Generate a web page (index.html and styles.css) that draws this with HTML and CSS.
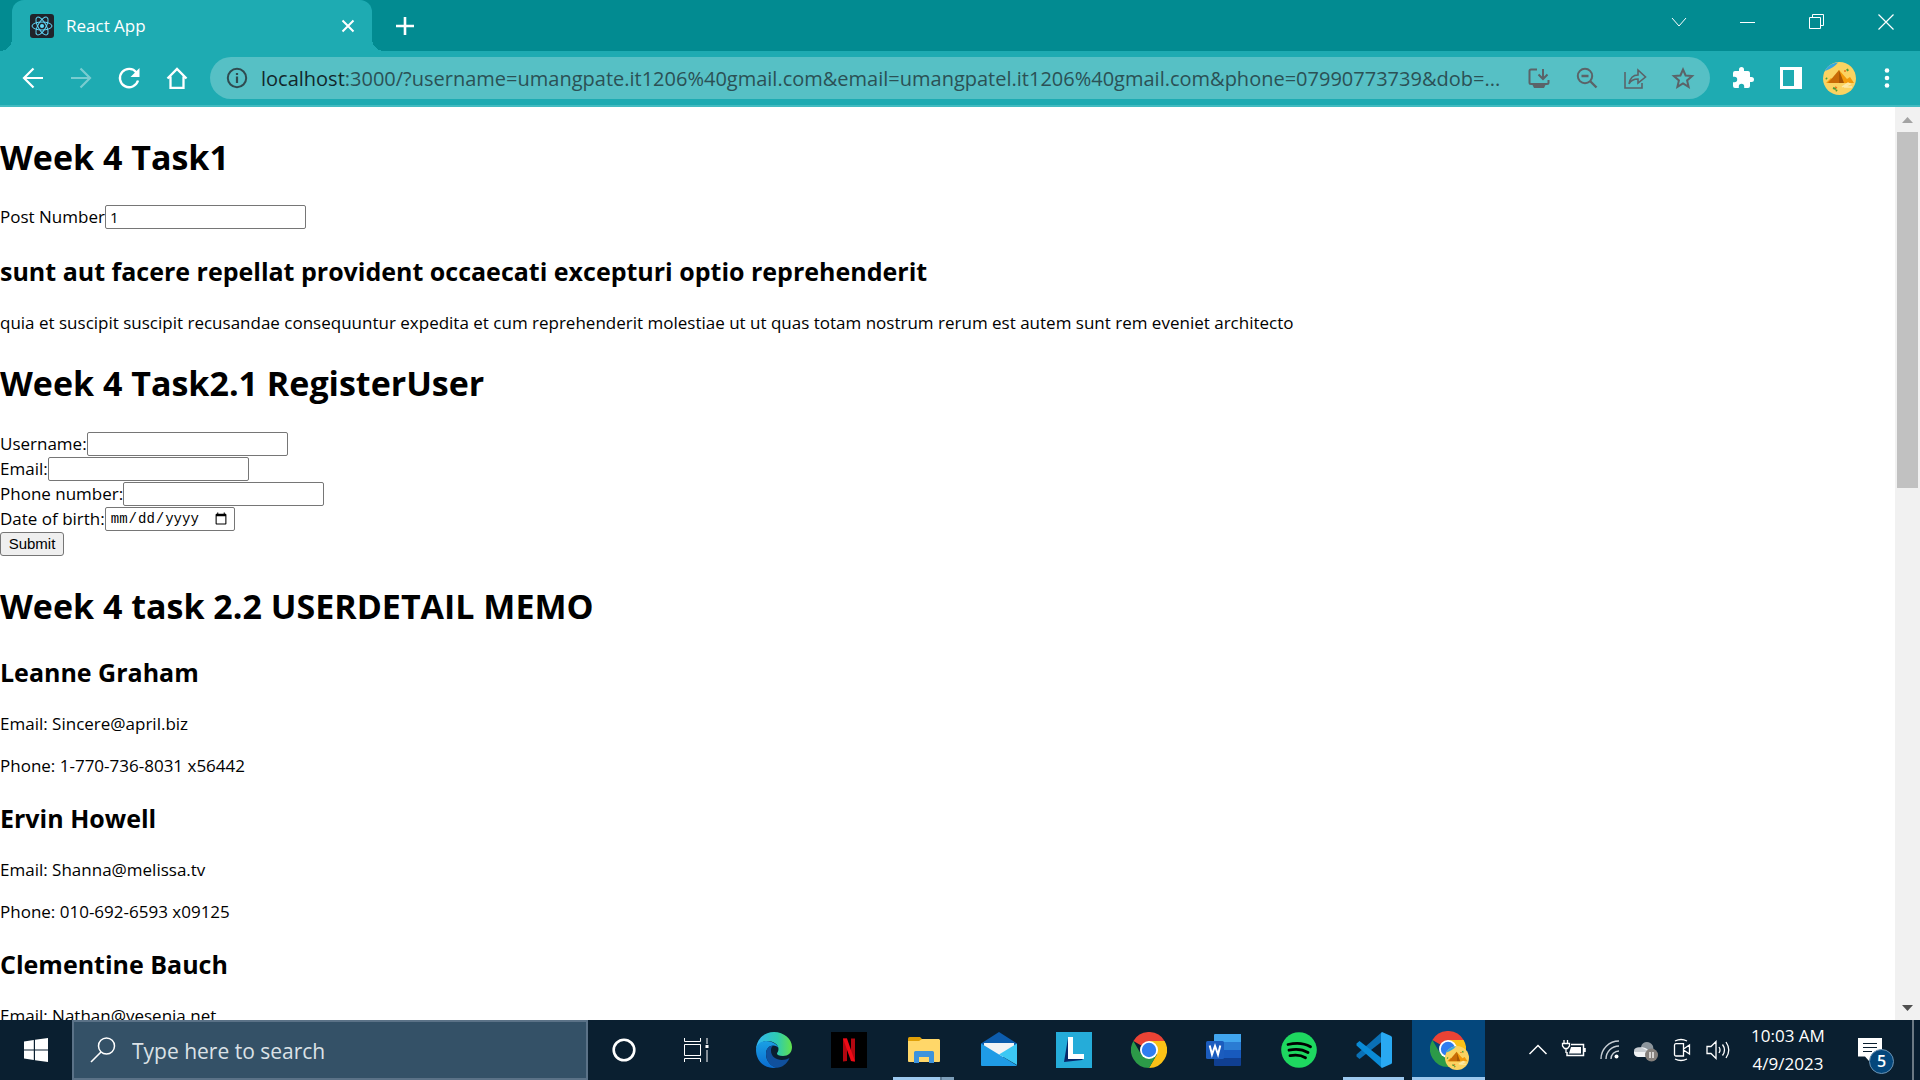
FILE: index.html
```html
<!DOCTYPE html>
<html lang="en">
<head>
<meta charset="utf-8">
<title>React App</title>
<link rel="stylesheet" href="styles.css">
</head>
<body>
<svg class="defs" width="0" height="0" aria-hidden="true">
  <defs>
    <symbol id="chrome" viewBox="0 0 36 36">
      <path d="M18 18 2.4 9A18 18 0 0 1 33.6 9z" fill="#ea4335"/>
      <path d="M18 9h15.6A18 18 0 0 1 18 36l7.8-13.500z" fill="#fbc116"/>
      <path d="M2.400 9A18 18 0 0 0 18 36l7.800-13.500L18 18 10.200 22.500z" fill="#2c9a48"/>
      <circle cx="18" cy="18" r="9" fill="#fff"/>
      <circle cx="18" cy="18" r="7.200" fill="#2f7df0"/>
    </symbol>
    <symbol id="pyramid" viewBox="0 0 33 33">
      <circle cx="16.500" cy="16.500" r="16.500" fill="#fbd361"/>
      <path d="M2 9Q4 3 12 1L15 0.500Q11 6 2 9z" fill="#36a8e0"/>
      <path d="M3 21l5-5 4 4 4-12 8 9 3-2 4 6z" fill="#f39a0a"/>
      <path d="M16 8v13H5z" fill="#c96b06"/>
      <path d="M16 8v13l5 0z" fill="#a85805"/>
      <path d="M19 25l6-4 2 1-6 3h8" fill="none" stroke="#fde9a5" stroke-width="1.500"/>
      <path d="M3 16l1 1M24 7l1 2M10 26l3 1M13 28l1 1" stroke="#4d9a35" stroke-width="2"/>
      <path d="M12 25l2 1M21 9h2" stroke="#ea7a20" stroke-width="1.500"/>
    </symbol>
  </defs>
</svg>

<header class="browser">
  <div class="tabstrip">
    <div class="tab">
      <svg class="favicon" viewBox="0 0 24 24"><rect width="24" height="24" rx="3" fill="#20232a"/><g fill="none" stroke="#61dafb" stroke-width="1"><ellipse cx="12" cy="12" rx="10" ry="4"/><ellipse cx="12" cy="12" rx="10" ry="4" transform="rotate(60 12 12)"/><ellipse cx="12" cy="12" rx="10" ry="4" transform="rotate(120 12 12)"/></g><circle cx="12" cy="12" r="2" fill="#61dafb"/></svg>
      <span class="tab-title">React App</span>
      <button class="plain tab-close" aria-label="Close tab"><svg width="24" height="24" viewBox="0 0 24 24"><path d="M6.500 6.500l11 11M17.500 6.500l-11 11" stroke="#fff" stroke-width="2"/></svg></button>
    </div>
    <button class="plain new-tab" aria-label="New tab"><svg width="24" height="24" viewBox="0 0 24 24"><path d="M12 3v18M3 12h18" stroke="#fff" stroke-width="2.600"/></svg></button>
    <div class="window-controls">
      <button class="plain" aria-label="Search tabs"><svg width="18" height="18" viewBox="0 0 18 18"><path d="M2 5l7 8 7-8" fill="none" stroke="#fff"/></svg></button>
      <button class="plain" aria-label="Minimize"><svg width="16" height="18" viewBox="0 0 16 18"><path d="M0 9.500h15" stroke="#fff"/></svg></button>
      <button class="plain" aria-label="Restore"><svg width="16" height="16" viewBox="0 0 16 16"><path d="M.500 3.500h11v11H.500zM3.500 3.500v-3h11v11h-3" fill="none" stroke="#fff"/></svg></button>
      <button class="plain" aria-label="Close"><svg width="16" height="16" viewBox="0 0 16 16"><path d="M.500.500l15 15M15.500.500l-15 15" stroke="#fff" stroke-width="1.200"/></svg></button>
    </div>
  </div>
  <div class="toolbar">
    <div class="icons">
      <button class="plain" aria-label="Back"><svg width="24" height="24" viewBox="0 0 24 24"><path d="M22 12H4M12.500 2.500L3 12l9.500 9.500" fill="none" stroke="#fff" stroke-width="2.200"/></svg></button>
      <button class="plain dim" aria-label="Forward"><svg width="24" height="24" viewBox="0 0 24 24"><path d="M2 12h18M11.500 2.500L21 12l-9.500 9.500" fill="none" stroke="#fff" stroke-width="2.200"/></svg></button>
      <button class="plain" aria-label="Reload"><svg width="24" height="24" viewBox="0 0 24 24"><path d="M19.500 6.500A9.200 9.200 0 1 0 21 14.500" fill="none" stroke="#fff" stroke-width="2.300"/><path d="M22.500 2v9h-9z" fill="#fff"/></svg></button>
      <button class="plain" aria-label="Home"><svg width="24" height="24" viewBox="0 0 24 24"><path d="M2.500 12.500L12 3l9.500 9.500M5.500 10.500v11.300h13V10.500" fill="none" stroke="#fff" stroke-width="2.300"/></svg></button>
    </div>
    <div class="omnibox">
      <svg class="info" width="24" height="24" viewBox="0 0 24 24"><circle cx="12" cy="12" r="9.200" fill="none" stroke="#2f4b50" stroke-width="2"/><path d="M12 10.500v6.500M12 7v2" stroke="#2f4b50" stroke-width="2.200"/></svg>
      <label for="url">localhost</label><input id="url" class="url" type="text" value=":3000/?username=umangpate.it1206%40gmail.com&amp;email=umangpatel.it1206%40gmail.com&amp;phone=07990773739&amp;dob=...">
      <div class="icons">
        <button class="plain" aria-label="Install"><svg width="24" height="24" viewBox="0 0 24 24"><path d="M10 3.500H4A1.500 1.500 0 0 0 2.500 5v11.500A1.500 1.500 0 0 0 4 18h16a1.500 1.500 0 0 0 1.500-1.500V14M16 3v9M11.500 8.500L16 13l4.500-4.500" fill="none" stroke="#5b6368" stroke-width="2"/><path d="M5 18h14l-2 4H7z" fill="#5b6368"/></svg></button>
        <button class="plain" aria-label="Zoom out"><svg width="24" height="24" viewBox="0 0 24 24"><circle cx="10" cy="10" r="7.200" fill="none" stroke="#5b6368" stroke-width="2"/><path d="M6.500 10h7M15 15l6.500 6.500" stroke="#5b6368" stroke-width="2.400"/></svg></button>
        <button class="plain" aria-label="Share"><svg width="24" height="24" viewBox="0 0 24 24"><path d="M2 6v16h17v-5M6 18c1-6 4-9 9-9V4l7.500 7L15 17v-4c-4 0-7 1-9 5z" fill="none" stroke="#5b6368" stroke-width="1.600"/></svg></button>
        <button class="plain" aria-label="Bookmark"><svg width="24" height="24" viewBox="0 0 24 24"><path d="M12 3.500l2.600 6 6.500.600-5 4.300 1.500 6.400L12 17.400l-5.600 3.400 1.500-6.400-5-4.300 6.500-.600z" fill="none" stroke="#5b6368" stroke-width="2"/></svg></button>
      </div>
    </div>
    <div class="icons">
      <button class="plain" aria-label="Extensions"><svg width="24" height="24" viewBox="0 0 24 24"><path d="M20.500 11H19V7a2 2 0 0 0-2-2h-4V3.500a2.500 2.500 0 0 0-5 0V5H4a2 2 0 0 0-2 2v3.800h1.500a2.700 2.700 0 0 1 0 5.400H2V20a2 2 0 0 0 2 2h3.800v-1.500a2.700 2.700 0 0 1 5.400 0V22H17a2 2 0 0 0 2-2v-4h1.500a2.500 2.500 0 0 0 0-5z" fill="#fff"/></svg></button>
      <button class="plain" aria-label="Side panel"><svg width="22" height="22" viewBox="0 0 22 22"><path d="M0 0h22v22H0zM3 3v16h11V3z" fill="#fff" fill-rule="evenodd"/></svg></button>
      <button class="plain" aria-label="Profile"><svg width="33" height="33"><use href="#pyramid"/></svg></button>
      <button class="plain" aria-label="Menu"><svg width="24" height="24" viewBox="0 0 24 24" fill="#fff"><circle cx="12" cy="4.500" r="2.300"/><circle cx="12" cy="12" r="2.300"/><circle cx="12" cy="19.500" r="2.300"/></svg></button>
    </div>
  </div>
</header>

<div class="viewport">
  <main class="page">
    <h1>Week 4 Task1</h1>
    <div class="field post"><label for="post">Post Number</label><input id="post" type="number" value="1"></div>
    <h2>sunt aut facere repellat provident occaecati excepturi optio reprehenderit</h2>
    <p>quia et suscipit suscipit recusandae consequuntur expedita et cum reprehenderit molestiae ut ut quas totam nostrum rerum est autem sunt rem eveniet architecto</p>
    <h1>Week 4 Task2.1 RegisterUser</h1>
    <form class="register">
      <div class="field"><label for="user">Username:</label><input id="user" type="text"></div>
      <div class="field"><label for="email">Email:</label><input id="email" type="email"></div>
      <div class="field"><label for="phone">Phone number:</label><input id="phone" type="tel"></div>
      <div class="field"><label for="dob">Date of birth:</label><input id="dob" type="date"></div>
      <div class="field"><button class="submit" type="submit">Submit</button></div>
    </form>
    <h1>Week 4 task 2.2 USERDETAIL MEMO</h1>
    <h2>Leanne Graham</h2>
    <p>Email: Sincere@april.biz</p>
    <p>Phone: 1-770-736-8031 x56442</p>
    <h2>Ervin Howell</h2>
    <p>Email: Shanna@melissa.tv</p>
    <p>Phone: 010-692-6593 x09125</p>
    <h2>Clementine Bauch</h2>
    <p>Email: Nathan@yesenia.net</p>
  </main>
  <div class="scrollbar" aria-hidden="true">
    <svg width="25" height="25" viewBox="0 0 25 25"><path d="M7 16h11l-5.500-6z" fill="#a3a3a3"/></svg>
    <div class="thumb"></div>
    <svg class="down" width="25" height="25" viewBox="0 0 25 25"><path d="M7 10h11l-5.500 6z" fill="#505050"/></svg>
  </div>
</div>

<footer class="taskbar">
  <button class="plain start" aria-label="Start"><svg width="24" height="24" viewBox="0 0 24 24" fill="#fff"><path d="M0 3.400L9.800 2v9.500H0zM11 1.800L24 0v11.500H11zM0 12.500h9.800V22L0 20.600zM11 12.500h13V24l-13-1.800z"/></svg></button>
  <div class="search">
    <svg width="26" height="26" viewBox="0 0 26 26"><circle cx="16.500" cy="9" r="8" fill="none" stroke="#fff" stroke-width="1.500"/><path d="M11 15L1 25" stroke="#fff" stroke-width="1.600"/></svg>
    <input type="text" aria-label="Search" placeholder="Type here to search">
  </div>
  <button class="plain sys" aria-label="Cortana"><svg width="24" height="24" viewBox="0 0 24 24"><circle cx="12" cy="12" r="10.300" fill="none" stroke="#fff" stroke-width="2.600"/></svg></button>
  <button class="plain sys" aria-label="Task view"><svg width="25" height="24" viewBox="0 0 25 24"><path d="M.500 0v3.500h16V0M.500 6.500h16v11H.500zM.500 24v-3.500h16V24M23 0v6M23 12v12" fill="none" stroke="#fff"/><path d="M21.500 7h3v3h-3z" fill="#fff"/></svg></button>

  <button class="plain app" aria-label="Microsoft Edge"><svg width="36" height="36" viewBox="0 0 36 36">
    <defs><linearGradient id="eg1"><stop offset="0" stop-color="#32b5f2"/><stop offset=".600" stop-color="#2fcbb0"/><stop offset="1" stop-color="#62e24c"/></linearGradient><linearGradient id="eg2" x1="0" y1="0" x2="0" y2="1"><stop offset="0" stop-color="#1aa0e4"/><stop offset="1" stop-color="#0a6cd0"/></linearGradient></defs>
    <path d="M0 17C1 7 8 0 18 0c10 0 18 7 18 15 0 6-4 9-9 9-4 0-6-1-6-2.500 0-1 1.500-1.500 1.500-4.500C22.500 12 17 9 11 9 6 9 2 12 0 17z" fill="url(#eg1)"/>
    <path d="M0 18c0-5 4-9 10-9 7 0 12 4 12.500 7-1-1.500-3-2.500-5-2.500C13 13.500 10 17 10 22c0 7 5 12.500 11 13.500C9 38 0 29 0 18z" fill="url(#eg2)"/>
    <path d="M10 22c0-5 3-8.500 7-8.500-1.500 1.500-2 3-2 5 0 6 5 9.500 11 9.500 3 0 5-.700 7.500-2C31 32 26 35.500 21 35.800 15 35 10 29 10 22z" fill="#10509c"/>
  </svg></button>
  <button class="plain app" aria-label="Netflix"><svg width="36" height="36" viewBox="0 0 36 36"><path d="M0 0h36v36H0z"/><path d="M12 6.500h4V29l-4 .500zM20 6.500h4v23l-4-.500z" fill="#b20710"/><path d="M12 6.500h4l8 23-4-.500z" fill="#ee0a16"/></svg></button>
  <button class="plain app open grouped" aria-label="File Explorer"><svg width="36" height="36" viewBox="0 0 36 36"><path d="M2 6.500a1.500 1.500 0 0 1 1.500-1.500H14l3 3v4H2z" fill="#e0a008"/><path d="M2 9h11l3-2h17l1 1v21a1 1 0 0 1-1 1H3a1 1 0 0 1-1-1z" fill="#ffd769"/><path d="M8 31V20.500a1.500 1.500 0 0 1 1.500-1.500h17a1.500 1.500 0 0 1 1.500 1.500V31h-5v-6H13v6z" fill="#3d93dc"/></svg></button>
  <button class="plain app" aria-label="Mail"><svg width="36" height="36" viewBox="0 0 36 36"><path d="M0 11.500L18 0l18 11.500V16H0z" fill="#0c5cad"/><path d="M3 11h30v9L18 27 3 20z" fill="#f2f3f5"/><path d="M0 11.500l18 11 18 11V33a1 1 0 0 1-1 1H1a1 1 0 0 1-1-1z" fill="#1f9be6"/><path d="M36 11.500L18 22.500 36 33z" fill="#3cc8f4"/></svg></button>
  <button class="plain app" aria-label="LearnIt"><svg width="36" height="36" viewBox="0 0 36 36"><path d="M0 0h36v36H0z" fill="#25acd9"/><path d="M12 6L8 30l4-3zM8 30l18-2 2-2H12z" fill="#06286b"/><path d="M12 5h5v17h11v5H12z" fill="#fff"/></svg></button>
  <button class="plain app" aria-label="Google Chrome"><svg width="36" height="36"><use href="#chrome"/></svg></button>
  <button class="plain app" aria-label="Word"><svg width="36" height="36" viewBox="0 0 36 36"><path d="M9 2h26v8H8V3a1 1 0 0 1 1-1z" fill="#41a5ee"/><path d="M8 10h27v8H8z" fill="#2b7cd3"/><path d="M8 18h27v8H8z" fill="#185abd"/><path d="M8 26h27v7a1 1 0 0 1-1 1H9a1 1 0 0 1-1-1z" fill="#103f91"/><rect y="9" width="18" height="18" rx="1.500" fill="#1b5cbe"/><path d="M3.700 13.500l2.300 9 3-8.500 3 8.500 2.300-9" fill="none" stroke="#fff" stroke-width="2"/></svg></button>
  <button class="plain app" aria-label="Spotify"><svg width="36" height="36" viewBox="0 0 36 36"><circle cx="18" cy="18" r="17.800" fill="#1ed760"/><path d="M7 12.500c8-2 16-1.500 22.500 2.200M8 18.200c7-1.700 13.500-1 19 2.300M9 23.700c6-1.200 11-.700 15.500 2" fill="none" stroke="#000" stroke-width="2.800" stroke-linecap="round"/></svg></button>
  <button class="plain app open" aria-label="Visual Studio Code"><svg width="36" height="36" viewBox="0 0 36 36"><path d="M26 9.500L3.500 27 .500 24.500v-2L26 0z" fill="#0a70b5"/><path d="M26 26.500L3.500 9 .500 11.500v2L26 36z" fill="#0a8bd6"/><path d="M26 0l8.500 3.800a2 2 0 0 1 1.500 2v24.400a2 2 0 0 1-1.500 2L26 36l-1-1.500V1.500z" fill="#29a9f2"/></svg></button>
  <button class="plain app open active" aria-label="Google Chrome window"><svg width="40" height="40" viewBox="0 0 40 40"><use href="#chrome" x="1" y="1" width="36" height="36"/><use href="#pyramid" x="16" y="16" width="24" height="24"/></svg></button>

  <div class="tray">
    <button class="plain" aria-label="Show hidden icons"><svg width="20" height="24" viewBox="0 0 20 24"><path d="M1.500 16L10 7.500l8.500 8.500" fill="none" stroke="#fff" stroke-width="1.500"/></svg></button>
    <button class="plain" aria-label="Battery"><svg width="26" height="24" viewBox="0 0 26 24"><path d="M10 6.500h12.500v11H6V14M24 10v4" fill="none" stroke="#fff" stroke-width="1.500"/><path d="M10 9h10v6.500H8z" fill="#fff"/><path d="M3 2v3M6.500 2v3M1.500 5.500h7V8L6.500 10.500H3.500L1.500 8zM5 10.500V15" fill="none" stroke="#fff" stroke-width="1.300"/></svg></button>
    <button class="plain" aria-label="Network"><svg width="20" height="24" viewBox="0 0 20 24"><path d="M1 21A18 18 0 0 1 19 3M6 21A13 13 0 0 1 19 8M11 21a8 8 0 0 1 8-8" fill="none" stroke="#c7ced4" stroke-width="1.400"/><circle cx="16.500" cy="18.500" r="2" fill="#fff"/></svg></button>
    <button class="plain" aria-label="OneDrive"><svg width="26" height="24" viewBox="0 0 26 24"><path d="M8 9c1-6 9-7 12-1l1 7-8 2z" fill="#8c959c"/><path d="M5 19c-6-1-5-9 1-9 4-2 9 0 11 5v4z" fill="#f1f3f5"/><path d="M1 12c2-4 8-4 15 2H2z" fill="#c7ccd1"/><circle cx="18.500" cy="17" r="6.500" fill="#85807c"/><path d="M17 14v6M20 14v6" stroke="#fff" stroke-width="1.300"/></svg></button>
    <button class="plain" aria-label="Meet now"><svg width="20" height="24" viewBox="0 0 20 24"><path d="M3 3Q9 0 15 3M3 21Q9 24 15 21M2.500 7A1.500 1.500 0 0 1 4 5.700h7.500V18H4a1.500 1.500 0 0 1-1.500-1.500zM11.500 11l6-4v9l-6-4" fill="none" stroke="#fff" stroke-width="1.300"/></svg></button>
    <button class="plain" aria-label="Volume"><svg width="24" height="24" viewBox="0 0 24 24"><path d="M1 8.500h4l5-5v17l-5-5H1zM13 9q2 3 0 6M16.500 6.500q4 5.500 0 11M20 4q5.500 8 0 16" fill="none" stroke="#fff" stroke-width="1.300"/></svg></button>
    <div class="clock"><span>10:03 AM</span><span>4/9/2023</span></div>
    <button class="plain notify" aria-label="Notifications"><svg width="24" height="24" viewBox="0 0 24 24"><path d="M0 0h24v18.500H14l-3 4.500-4-4.500H0z" fill="#fff"/><path d="M5 5.500h14M5 9.500h14M5 13.500h9" stroke="#0a1f30" stroke-width="1.200"/></svg><span class="badge">5</span></button>
    <div class="show-desktop"></div>
  </div>
</footer>
</body>
</html>
```

FILE: styles.css
```css
* { box-sizing: border-box; }

body {
  margin: 0;
  height: 100vh;
  display: flex;
  flex-direction: column;
  overflow: hidden;
  font-family: "Open Sans", "Noto Sans", sans-serif;
  color: #000;
  background: #fff;
}

svg { display: block; flex: none; }
.defs { position: absolute; }

.plain {
  display: flex;
  align-items: center;
  justify-content: center;
  padding: 0;
  border: 0;
  background: none;
  color: #fff;
  font-family: inherit;
}

/* Browser frame */
.browser { flex: none; background: #1eabb2; }

.tabstrip {
  display: flex;
  align-items: center;
  height: 51px;
  padding-left: 12px;
  background: #028b91;
}

.tab {
  position: relative;
  display: flex;
  align-items: center;
  gap: 12px;
  width: 360px;
  height: 51px;
  padding: 0 12px 0 18px;
  border-radius: 12px 12px 0 0;
  background: #1eabb2;
  color: #fff;
  font-size: 17px;
}

.tab::before,
.tab::after {
  content: "";
  position: absolute;
  bottom: 0;
  width: 12px;
  height: 12px;
}
.tab::before { right: 100%; background: radial-gradient(circle at 0 0, #028b91 12px, #1eabb2 12px); }
.tab::after { left: 100%; background: radial-gradient(circle at 100% 0, #028b91 12px, #1eabb2 12px); }

.favicon { width: 24px; height: 24px; }
.tab-title { flex: 1; }
.new-tab { width: 66px; height: 48px; }

.window-controls { display: flex; margin-left: auto; align-self: flex-start; }
.window-controls .plain { width: 69px; height: 43px; }

.toolbar {
  display: flex;
  align-items: center;
  gap: 9px;
  height: 56px;
  padding: 0 9px;
  border-bottom: 2px solid #42bbc1;
}

.icons { display: flex; flex: none; }
.icons .plain { width: 48px; height: 42px; }
.dim { opacity: 0.4; }

.omnibox {
  display: flex;
  align-items: center;
  flex: 1;
  min-width: 0;
  height: 42px;
  padding: 0 3px 0 15px;
  border-radius: 21px;
  background: #56c0c5;
  color: #12282b;
  font-size: 20px;
}
.info { margin-right: 12px; }

.url {
  flex: 1;
  min-width: 0;
  padding: 0;
  border: 0;
  background: none;
  color: #2b5155;
  font: inherit;
}

/* Page */
.viewport { display: flex; flex: 1; min-height: 0; }

.page {
  flex: 1;
  min-width: 0;
  overflow: hidden;
  padding-top: 2px;
  font-size: 17px;
  line-height: 24px;
}

.page h1 { margin: 24px 0; font-size: 34px; line-height: 48px; }
.page h2 { margin: 22px 0; font-size: 25px; line-height: 36px; }
.page p { margin: 18px 0; }

.field { display: flex; align-items: center; height: 25px; }
.page .post { height: 24px; }
.post + h2 { margin-top: 24px; }
.register { padding-bottom: 2px; }

.field input {
  width: 201px;
  height: 24px;
  padding: 1px 4px;
  border: 1px solid #767676;
  border-radius: 2px;
  background: #fff;
  color: #000;
  font-family: "Open Sans", sans-serif;
  font-size: 15px;
}

.field input[type="date"] {
  width: 130px;
  font-family: "Liberation Mono", monospace;
  font-size: 14px;
}

.submit {
  width: 64px;
  height: 24px;
  padding: 0;
  border: 1px solid #767676;
  border-radius: 3px;
  background: #efefef;
  color: #000;
  font-family: "Liberation Sans", Arial, sans-serif;
  font-size: 15px;
}

.scrollbar {
  display: flex;
  flex-direction: column;
  align-items: center;
  flex: none;
  width: 25px;
  background: #f1f1f1;
}
.thumb { width: 21px; height: 39%; background: #c1c1c1; }
.down { margin-top: auto; }

/* Taskbar */
.taskbar {
  display: flex;
  flex: none;
  height: 60px;
  background: #0a1f30;
  color: #fff;
}

.start { width: 72px; }

.search {
  display: flex;
  align-items: center;
  gap: 16px;
  width: 516px;
  padding: 0 16px;
  border: 2px solid #5b7287;
  background: #345167;
}
.search input {
  flex: 1;
  min-width: 0;
  padding: 2px 0 0;
  border: 0;
  background: none;
  color: #fff;
  font-family: inherit;
  font-size: 21px;
}
.search input::placeholder { color: #dbe1e6; }

.sys { width: 72px; }

.app {
  position: relative;
  width: 73px;
  margin: 0 1px;
}
.sys + .app { margin-left: 5px; }
.open::after {
  content: "";
  position: absolute;
  left: 6px;
  right: 6px;
  bottom: 0;
  height: 3px;
  background: #9cc8ee;
}
.grouped::after { background: linear-gradient(90deg, #9cc8ee 47px, #5f7c94 47px, #5f7c94 49px, #7d9eb9 49px); }
.active { background: #04477c; }
.active::after { left: 0; right: 0; }

.tray { display: flex; align-items: stretch; margin-left: auto; }
.tray .plain { width: 36px; }

.clock {
  display: flex;
  flex-direction: column;
  align-items: center;
  justify-content: center;
  width: 104px;
  font-size: 17px;
  line-height: 28px;
}

.tray .notify { position: relative; width: 60px; }
.badge {
  position: absolute;
  left: 29px;
  top: 29px;
  width: 25px;
  height: 25px;
  border: 1px solid #6c93b3;
  border-radius: 50%;
  background: #04477c;
  font-size: 16px;
  font-weight: 600;
  line-height: 23px;
  text-align: center;
}

.show-desktop { width: 8px; margin-left: 12px; border-left: 2px solid #6c7983; }
```
